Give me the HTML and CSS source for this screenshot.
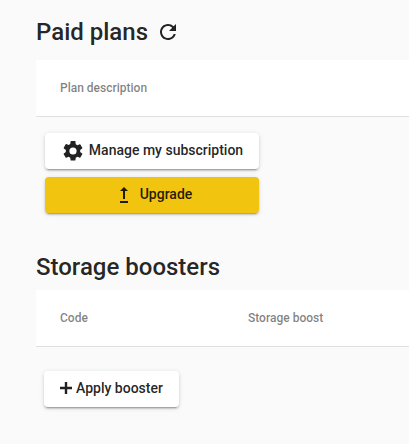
FILE: index.html
```html
<!DOCTYPE html>
<html lang="en">
<head>
<meta charset="utf-8">
<title>Paid plans</title>
<link rel="stylesheet" href="styles.css">
</head>
<body>
<main>
  <section class="plans">
    <h2>Paid plans
      <svg class="refresh" viewBox="0 0 24 24"><path d="M17.65 6.35A7.958 7.958 0 0 0 12 4c-4.42 0-7.99 3.58-7.99 8s3.57 8 7.99 8c3.73 0 6.84-2.55 7.73-6h-2.08A5.99 5.99 0 0 1 12 18c-3.31 0-6-2.69-6-6s2.69-6 6-6c1.66 0 3.14.69 4.22 1.78L13 11h7V4z"/></svg>
    </h2>
    <div class="table"><span>Plan description</span></div>
    <div class="actions">
      <button class="btn"><svg class="gear" viewBox="0 0 24 24"><path d="M19.14 12.94c.04-.3.06-.61.06-.94s-.02-.64-.07-.94l2.03-1.58a.49.49 0 0 0 .12-.61l-1.92-3.32a.49.49 0 0 0-.59-.22l-2.39.96c-.5-.38-1.03-.7-1.62-.94l-.36-2.54A.48.48 0 0 0 13.92 2h-3.84a.48.48 0 0 0-.47.41l-.36 2.54c-.59.24-1.13.57-1.62.94l-2.39-.96a.49.49 0 0 0-.59.22L2.74 8.87a.48.48 0 0 0 .12.61l2.03 1.58c-.05.3-.09.63-.09.94s.02.64.07.94l-2.03 1.58a.49.49 0 0 0-.12.61l1.92 3.32c.12.22.37.29.59.22l2.39-.96c.5.38 1.03.7 1.62.94l.36 2.54c.05.24.24.41.48.41h3.84c.24 0 .44-.17.47-.41l.36-2.54c.59-.24 1.13-.56 1.62-.94l2.39.96c.22.08.47 0 .59-.22l1.92-3.32a.49.49 0 0 0-.12-.61zM12 15.6A3.6 3.6 0 1 1 12 8.4a3.6 3.6 0 0 1 0 7.2z"/></svg><span class="label">Manage my subscription</span></button>
      <button class="btn upgrade"><svg class="up" viewBox="0 0 24 24"><path d="M16 18v2H8v-2zM11 7.99V16h2V7.99h3L12 4 8 7.99z"/></svg><span class="label">Upgrade</span></button>
    </div>
  </section>
  <section>
    <h2>Storage boosters</h2>
    <div class="table"><span class="code">Code</span><span>Storage boost</span></div>
    <button class="btn apply"><svg class="plus" viewBox="0 0 12 12"><path d="M4.8 0h2.4v4.8H12v2.4H7.2V12H4.8V7.2H0V4.8h4.8z"/></svg><span class="label">Apply booster</span></button>
  </section>
</main>
</body>
</html>
```
FILE: styles.css
```css
* { box-sizing: border-box; }
body { margin: 0; min-height: 100vh; background: #fafafa; color: rgba(0, 0, 0, .87); font-family: Roboto, sans-serif; overflow: hidden; }
main { padding: 16px 0 0 36px; }
svg { display: block; fill: currentColor; flex: none; }
h2 { display: flex; align-items: center; height: 32px; margin: 0; font-size: 24px; font-weight: 500; line-height: 32px; }
.plans { height: 235px; }
.refresh { width: 24px; height: 24px; margin-left: 8px; }
.table { display: flex; align-items: center; height: 57px; margin-top: 12px; padding-left: 24px; background: #fff; border-bottom: 1px solid #e0e0e0; color: rgba(0, 0, 0, .5); font-size: 12px; font-weight: 500; white-space: nowrap; }
.code { width: 188px; }
section + section .table { margin-top: 7px; }
.actions { display: flex; flex-direction: column; gap: 8px; width: 214px; margin: 16px 0 0 9px; }
.btn { display: flex; align-items: center; justify-content: center; height: 36px; padding: 0; border: 0; border-radius: 4px; background: #fff; color: rgba(0, 0, 0, .87); font: 500 14px/34px Roboto, sans-serif; white-space: nowrap; box-shadow: 0 3px 1px -2px rgba(0, 0, 0, .2), 0 2px 2px rgba(0, 0, 0, .14), 0 1px 5px rgba(0, 0, 0, .12); }
.label { height: 36px; }
.upgrade { background: #f1c40f; }
.gear { width: 24px; height: 24px; margin-right: 4px; }
.up { width: 24px; height: 24px; margin-right: 4px; }
.apply { width: 135px; margin: 24px 0 0 8px; }
.plus { width: 12px; height: 12px; margin-right: 4px; position: relative; top: -1px; }
```
